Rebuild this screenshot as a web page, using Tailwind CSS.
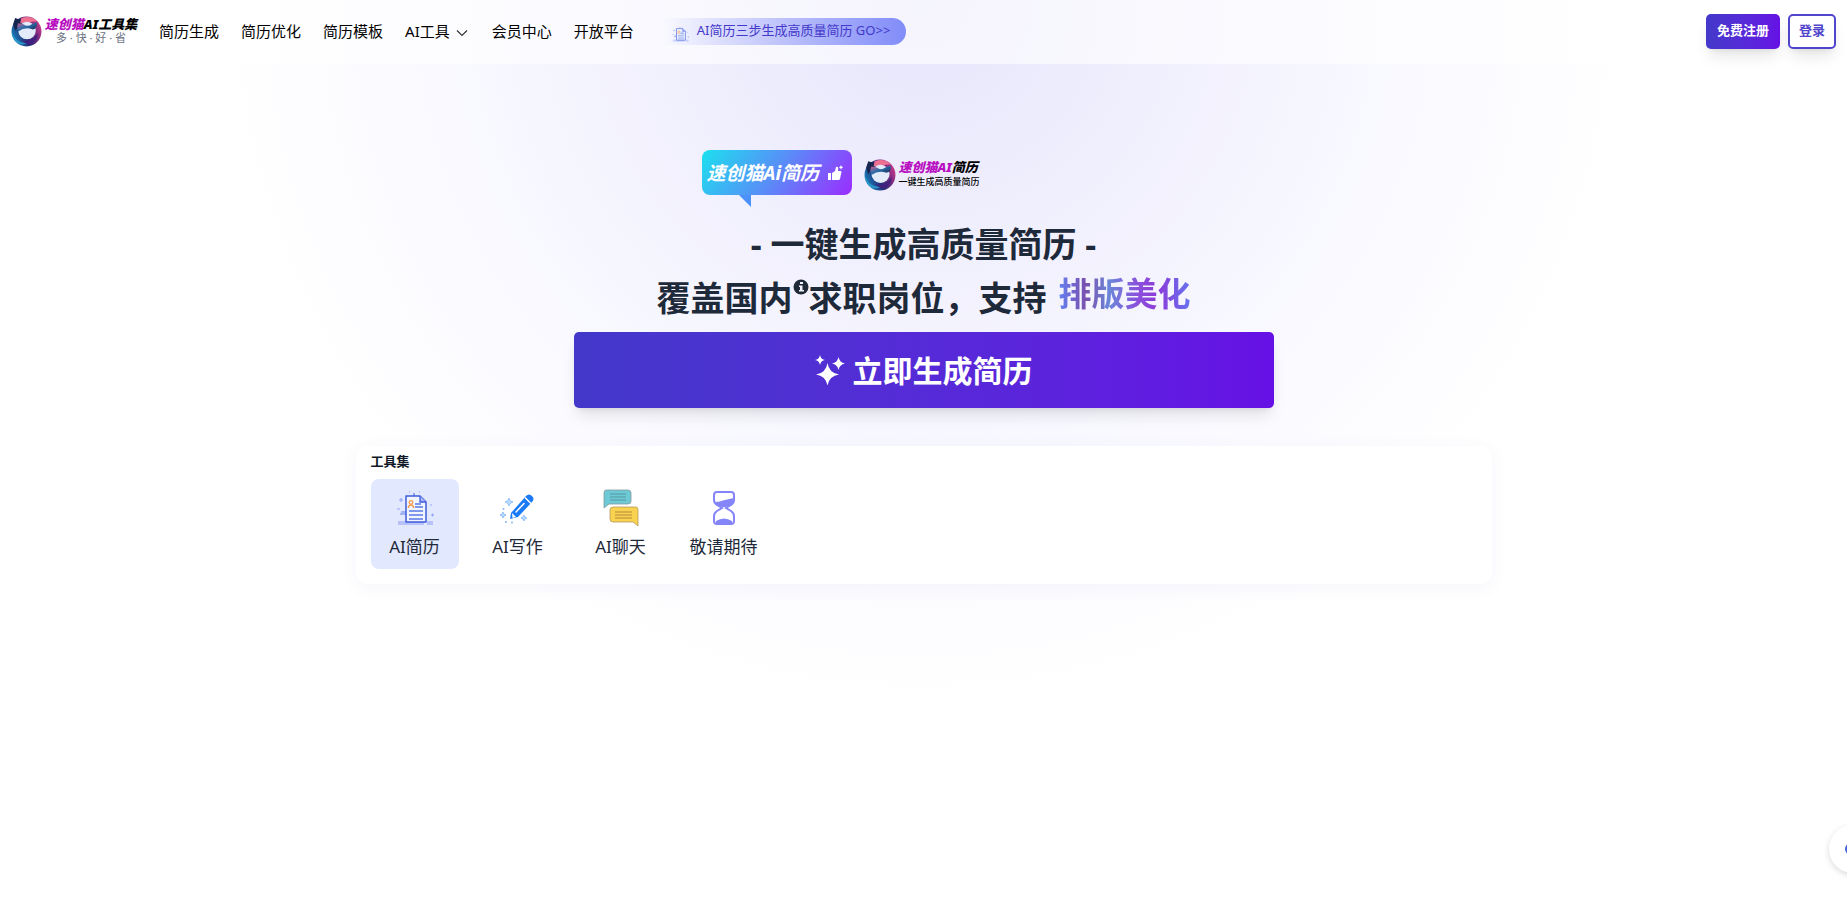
<!DOCTYPE html>
<html lang="zh-CN">
<head>
<meta charset="utf-8">
<meta name="viewport" content="width=device-width, initial-scale=1">
<title>速创猫AI简历</title>
<script src="https://cdn.jsdelivr.net/npm/@tailwindcss/browser@4"></script>
</head>
<body class="min-h-screen overflow-x-hidden bg-[radial-gradient(circle_710px_at_50%_0,#e7e5fb_0,#f0effd_240px,#f8f8ff_450px,#ffffff_710px)] bg-no-repeat font-['Noto_Sans','Noto_Sans_CJK_SC',sans-serif] text-gray-800">

<svg class="absolute size-0" aria-hidden="true">
  <defs>
    <linearGradient id="ring" x1="0" y1="0.7" x2="1" y2="0.2">
      <stop offset="0" stop-color="#1686c0"/><stop offset="0.4" stop-color="#252a72"/><stop offset="0.7" stop-color="#7a2a80"/><stop offset="1" stop-color="#d93f8c"/>
    </linearGradient>
    <linearGradient id="cat" x1="0" y1="0" x2="1" y2="1">
      <stop offset="0" stop-color="#e8588f"/><stop offset="0.45" stop-color="#2b6fa8"/><stop offset="1" stop-color="#171c4b"/>
    </linearGradient>
    <symbol id="logo" viewBox="0 0 30 30">
      <circle cx="15" cy="15" r="14.5" fill="url(#ring)"/>
      <path d="M2 8 L4 2 L10 4 Q15 1 20 3 L16 7 Q9 7 4 14Z" fill="#17264f"/>
      <path d="M10 2 Q19 -1 25 5 Q20 5 16 7 Q12 6 9 7Z" fill="#ef7192"/>
      <circle cx="15.500" cy="14" r="8.500" fill="#e3ebfb"/>
      <path d="M7 7 L12 8 Q16 11 20 8 L25 6 Q26 12 21 13 Q14 10 7 15 Q5 11 7 7Z" fill="url(#cat)"/>
      <path d="M1 16 Q5 27 16 26 Q9 30 4 24 Q1 20 1 16Z" fill="#2fa5d6" opacity="0.75"/>
      <path d="M9 23 Q19 27 26 17 Q25 26 17 28Z" fill="#402081"/>
    </symbol>
    <symbol id="resume" viewBox="0 0 38 38">
      <path d="M2 34h26M31 34h6M2 36h26M31 36h6" stroke="#9aabf5" stroke-width="1.500" opacity="0.8"/>
      <path d="M4 26h7M5 24h5" stroke="#8ea2f4" stroke-width="1.500"/>
      <path d="M10 8h14l6 6v20H10z" fill="#f1f5ff" stroke="#3f5bdc" stroke-width="1.500" stroke-linejoin="round"/>
      <path d="M24 8v6h6" fill="#a9b9f8" stroke="#3f5bdc" stroke-width="1.300"/>
      <path d="M18 5v3" stroke="#3f5bdc"/>
      <circle cx="15" cy="14.500" r="1.800" fill="none" stroke="#f49a4a" stroke-width="1.300"/>
      <path d="M12.500 20v-1.500q2.500-3 5 0V20" fill="none" stroke="#f49a4a" stroke-width="1.500"/>
      <path d="M19 16h6M19 19h8M13 23h14M13 27h14M13 31h14" stroke="#5a78e8" stroke-width="1.300"/>
      <path d="M3 12h4M5 10v4M1 21h3M35 27h3M36.500 25.500v3M34 17h2M13 4h1M23 4h1" stroke="#93a6f6" stroke-width="1.200"/>
    </symbol>
  </defs>
</svg>

<header class="flex h-16 items-center justify-between bg-white/60 px-[11px] pb-[2px]">
  <div class="flex items-center">
    <a href="#" class="flex items-center gap-[2px]" aria-label="速创猫AI工具集">
      <svg class="size-[31px]"><use href="#logo"/></svg>
      <span class="flex w-[94px] flex-col items-center whitespace-nowrap">
        <span class="text-[13px] leading-[14px] font-black text-black italic"><span class="text-[#b80fc0]">速创猫</span>AI工具集</span>
        <span class="text-[11px] leading-[14px] text-gray-500">多 · 快 · 好 · 省</span>
      </span>
    </a>
    <nav class="ml-[21px] flex items-center gap-[22px] text-[15px] leading-6 whitespace-nowrap text-black">
      <a href="#">简历生成</a>
      <a href="#">简历优化</a>
      <a href="#">简历模板</a>
      <button type="button" class="flex items-center gap-[6px] pr-[2px]">AI工具
        <svg class="mt-1 h-2 w-3" viewBox="0 0 12 8" fill="none" stroke="#333" stroke-width="1.200"><path d="M1 1.500l5 5 5-5"/></svg>
      </button>
      <a href="#">会员中心</a>
      <a href="#">开放平台</a>
    </nav>
    <a href="#" class="ml-[29px] flex h-[27px] items-center gap-2 rounded-r-full bg-linear-to-r from-transparent to-[#818cf8] pr-4 pl-[9px] text-[13px] whitespace-nowrap text-[#4338ca]">
      <svg class="mt-1 size-[17px] opacity-90"><use href="#resume"/></svg>
      <span>AI简历三步生成高质量简历 GO&gt;&gt;</span>
    </a>
  </div>
  <div class="flex gap-2 text-[13px] font-bold whitespace-nowrap">
    <button type="button" class="h-[35px] rounded-[5px] bg-linear-to-r from-[#4338ca] to-[#6610e5] px-[11px] text-white shadow-lg">免费注册</button>
    <button type="button" class="h-[35px] rounded-[5px] border-2 border-[#5145cd] bg-white px-[9px] text-[#5145cd] shadow-lg">登录</button>
  </div>
</header>

<main class="flex flex-col items-center">
  <section class="flex w-full max-w-[700px] flex-col pt-[86px]">
    <div class="ml-32 flex h-[45px] items-center gap-3">
      <div class="relative flex h-[45px] w-[150px] items-center gap-2 rounded-lg bg-linear-[125deg] from-[#1ce0ee] via-[#5a8cf8] to-[#9b2cff] pl-[5px] whitespace-nowrap text-white">
        <span class="text-[19px] leading-6 font-bold italic">速创猫Ai简历</span>
        <svg class="h-4 w-[17px] shrink-0" viewBox="0 0 17 16" fill="#fff"><path d="M1 8h3v7H1zM5 8l3-2 1-4q3-1 2 4h3q1 1 0 3l-1 5q0 1-2 1H5z"/><path d="M14 0l.7 1.600 1.600.7-1.600.7L14 5l-.7-2-1.600-.7 1.600-.7z"/></svg>
        <svg class="absolute top-[45px] left-[37px] h-3 w-3" viewBox="0 0 12 12"><path d="M0 0h12v12z" fill="#4b91fb"/></svg>
      </div>
      <div class="mt-1 flex items-center gap-[3px]">
        <svg class="size-[32px]"><use href="#logo"/></svg>
        <span class="flex flex-col whitespace-nowrap">
          <span class="text-[13px] leading-[15px] font-black text-black italic"><span class="text-[#b80fc0]">速创猫AI</span>简历</span>
          <span class="text-[9px] leading-[14px] font-medium text-black">一键生成高质量简历</span>
        </span>
      </div>
    </div>
    <h1 class="mt-[22px] text-center text-[34px] leading-[54px] font-bold whitespace-nowrap">
      <span class="block">- 一键生成高质量简历 -</span>
      <span class="flex justify-center">
        <span>覆盖国内</span>
        <svg class="mt-2 size-4" viewBox="0 0 16 16"><circle cx="8" cy="8" r="7.500" fill="#1f2937"/><path d="M7 3h3v2H7zM6 6.500h3.500V11H11v1.500H6V11h1V8H6z" fill="#f3f2fe"/></svg>
        <span>求职岗位，支持</span>
        <span class="-mt-1 ml-3 bg-[linear-gradient(90deg,#6480f0,#7a50ae_20%,#6a86d8_38%,#8a50dc_60%,#8c3ad8_75%,#6575f0)] bg-clip-text text-[33px] text-transparent">排版美化</span>
      </span>
    </h1>
    <button type="button" class="mt-[7px] flex h-[76px] w-full items-center justify-center gap-2 rounded-[5px] bg-linear-to-r from-[#4338ca] to-[#6610e5] text-[30px] font-bold text-white shadow-lg">
      <svg class="size-[30px]" viewBox="0 0 30 30" fill="#fff"><path d="M12.500 8Q14 18 24 19.500 14 21 12.500 31 11 21 1 19.500 11 18 12.500 8zM5 0q.8 4.500 5 5-4.200.5-5 5-.8-4.500-5-5 4.200-.5 5-5zM23.500 2q1 5.500 6.500 6.500-5.500 1-6.500 6.500-1-5.500-6.500-6.500 5.500-1 6.500-6.500z"/></svg>
      立即生成简历
    </button>
  </section>

  <section class="mt-[38px] w-full max-w-[1136px] rounded-xl bg-white px-[15px] pt-[5px] pb-[15px] shadow-[0_4px_18px_rgba(80,80,180,0.06)]">
    <h2 class="text-[13px] leading-5 font-bold text-gray-900">工具集</h2>
    <div class="mt-2 flex gap-[15px] text-[17px] leading-6 whitespace-nowrap">
      <a href="#" class="flex h-[90px] w-[88px] flex-col items-center gap-[9px] rounded-lg bg-[#e2e8fe] pt-[9px]">
        <svg class="size-[38px]"><use href="#resume"/></svg>
        <span>AI简历</span>
      </a>
      <a href="#" class="flex h-[90px] w-[88px] flex-col items-center gap-[9px] rounded-lg pt-[9px]">
        <svg class="size-[38px]" viewBox="0 0 38 38">
          <path d="M12 25L27 8q3-3 6 0 3 3 0 6L19 29l-8 2z" fill="#1b7af5"/>
          <path d="M26 9.500l6 6" stroke="#fff" stroke-width="1.500"/><path d="M17 24l8-8.500" stroke="#fff" stroke-width="1.500" stroke-linecap="round"/><path d="M13 25l4 4-3.500 1z" fill="#fff"/>
          <g fill="#bddcff" stroke="#7db5f8" stroke-width="0.800"><path d="M10 10q.5 4 4 4-3.500.5-4 4-.5-3.500-4-4 3.500-.5 4-4zM4 24q.4 3 3 3-2.600.4-3 3-.4-2.600-3-3 2.600-.4 3-3zM25 27q.4 3 3 3-2.600.4-3 3-.4-2.600-3-3 2.600-.4 3-3z"/></g>
          <g fill="#8ab5f3"><circle cx="4.500" cy="21" r="1"/><circle cx="7" cy="34" r="1"/><circle cx="13" cy="34.500" r="1"/></g>
        </svg>
        <span>AI写作</span>
      </a>
      <a href="#" class="flex h-[90px] w-[88px] flex-col items-center gap-[9px] rounded-lg pt-[9px]">
        <svg class="size-[38px]" viewBox="0 0 38 38">
          <path d="M4 2h22q3 0 3 3v8q0 3-3 3H7l-5 4V5q0-3 2-3z" fill="#6cc9d5" stroke="#899a9c" stroke-width="0.800"/>
          <path d="M8 6h16M8 9h16M8 12h16" stroke="#5499a3"/>
          <path d="M11 19h23q2 0 2 3v16l-5-4H11q-3 0-3-3v-9q0-3 3-3z" fill="#f9d34f" stroke="#b29b62" stroke-width="0.800"/>
          <path d="M13 24h17M13 27h17M13 30h17" stroke="#b5893f"/>
        </svg>
        <span>AI聊天</span>
      </a>
      <a href="#" class="flex h-[90px] w-[88px] flex-col items-center gap-[9px] rounded-lg pt-[9px]">
        <svg class="size-[38px]" viewBox="0 0 38 38">
          <path d="M12 4h14q3 0 3 3v5q0 3-3 5l-5 3 5 3q3 2 3 5v5q0 3-3 3H12q-3 0-3-3v-5q0-3 3-5l5-3-5-3q-3-2-3-5V7q0-3 3-3z" fill="#fff" stroke="#8585fa" stroke-width="2"/>
          <path d="M9 14q5 0 9-1.500 5-1.500 11-2.500v4q-1 2-4 4l-4 1h-4l-5-2q-2-1-3-3zM11 36v-3q8-5 16 0v3z" fill="#8585fa"/>
        </svg>
        <span>敬请期待</span>
      </a>
    </div>
  </section>
</main>

<button type="button" aria-label="客服" class="fixed right-[-30px] bottom-[45px] flex size-[48px] items-center rounded-full bg-white pl-[16px] shadow-[0_2px_6px_rgba(0,0,0,0.15)]">
  <svg class="size-3" viewBox="0 0 12 12"><circle cx="6" cy="6" r="6" fill="#4361d8"/></svg>
</button>
</body>
</html>
